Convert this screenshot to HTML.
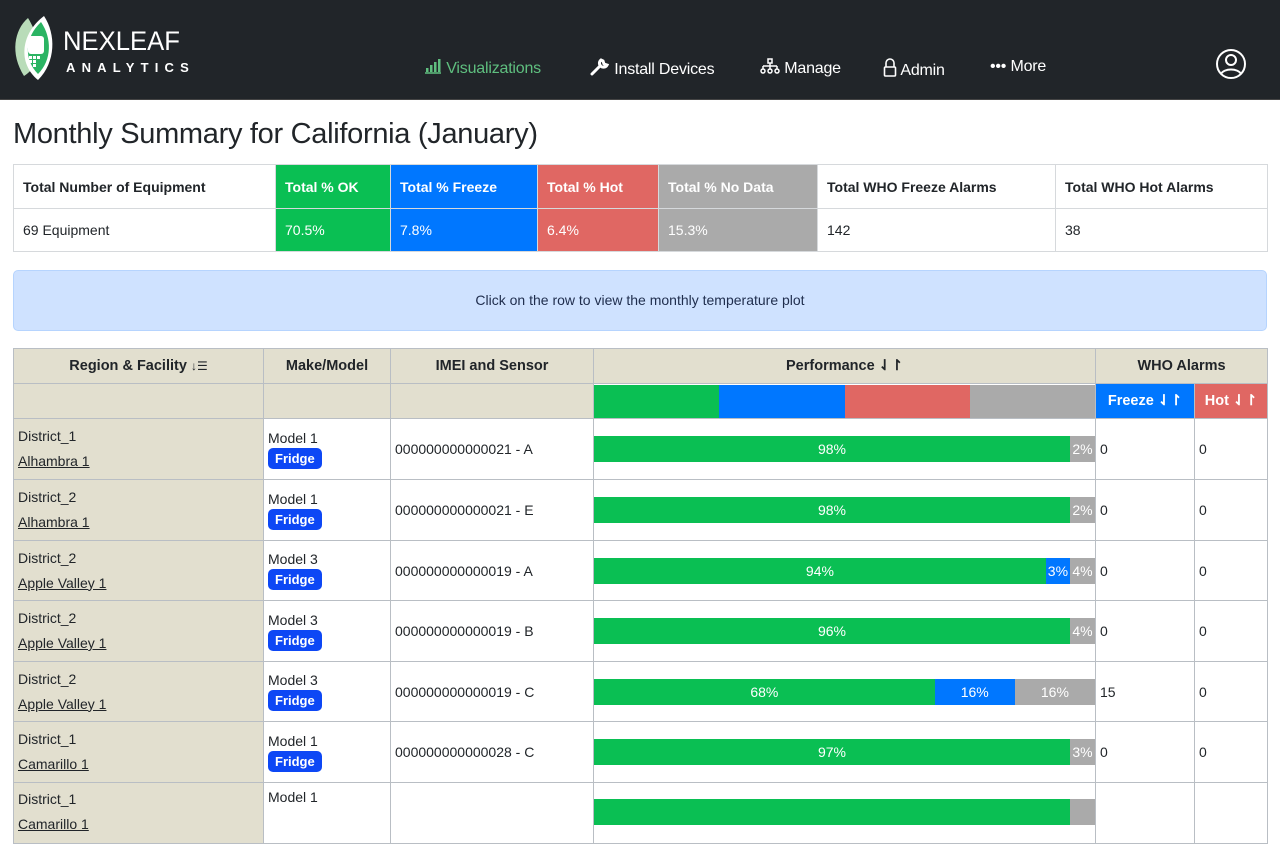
<!DOCTYPE html>
<html><head><meta charset="utf-8"><style>
*{box-sizing:border-box;margin:0;padding:0}
body{width:1280px;height:800px;overflow:hidden;background:#fff;font-family:"Liberation Sans",sans-serif;color:#212529;position:relative}
.nav{position:absolute;left:0;top:0;width:1280px;height:100px;background:#212529;border-bottom:1px solid #444}
.nav .it{position:absolute;top:58px;font-size:16px;color:#fff;letter-spacing:-0.2px;white-space:nowrap}
h1{position:absolute;left:13px;top:118px;font-size:29px;font-weight:normal;letter-spacing:-0.3px}
table{border-collapse:collapse;table-layout:fixed;position:absolute}
td,th{border:1px solid #d6d9dc;font-size:14px}
.sum td{padding:0 9px}
.sum th{padding:0 9px;text-align:left;font-weight:bold}
.w{color:#fff}
.info{position:absolute;left:13px;top:270px;width:1254px;height:61px;background:#cfe2ff;border:1px solid #b6d4fe;border-radius:5px;text-align:center;line-height:58px;font-size:14px;color:#1f2d4d}
.m td,.m th{border:1px solid #b9bec4}
.m th{background:#e2dfcf;font-weight:bold;text-align:center;font-size:14.5px}
.m th.b{background:#0077ff;color:#fff}
.m th.r{background:#e06763;color:#fff}
.m td{font-size:14px;padding:0 4px}
.rf{background:#e2dfcf}
.rf div{line-height:25px}
.rf u{text-decoration:underline}
.badge{display:inline-block;background:#0d47f5;color:#fff;font-weight:bold;font-size:13px;border-radius:5px;padding:3px 7px;margin-top:2px}
.bar{display:flex;height:26px;color:#fff;font-size:14px;line-height:26px;text-align:center}
.g{background:#0abf53}.b{background:#0077ff}.r{background:#e06763}.gr{background:#aaa}
td.p{padding:0!important}
</style></head><body>
<div class="nav">
<svg style="position:absolute;left:10px;top:14px" width="46" height="68" viewBox="0 0 46 68">
<path d="M18 4 C4 16 0 40 14 62 C30 52 34 30 18 4Z" fill="#b9dcb9"/>
<path d="M34 2 C46 20 46 48 28 66 C8 50 10 20 34 2Z" fill="#fff"/>
<path d="M31 8 C42 24 42 46 28 60 C14 46 14 24 31 8Z" fill="#2bb463"/>
<rect x="18" y="22" width="16" height="18" rx="3" fill="#fff"/>
<rect x="19" y="42" width="3" height="3" fill="#fff"/><rect x="23" y="42" width="3" height="3" fill="#fff"/><rect x="27" y="42" width="3" height="3" fill="#fff"/>
<rect x="19" y="46" width="3" height="3" fill="#fff"/><rect x="23" y="46" width="3" height="3" fill="#fff"/><rect x="23" y="50" width="3" height="3" fill="#fff"/>
</svg>
<div style="position:absolute;left:63px;top:26px;color:#fff;font-size:27px;letter-spacing:0;line-height:30px;transform:scaleX(0.95);transform-origin:left">NEXLEAF</div>
<div style="position:absolute;left:66px;top:60px;color:#fff;font-size:13px;font-weight:bold;letter-spacing:6.2px">ANALYTICS</div>
<div class="it" style="left:424px;color:#5fbf7f"><svg width="18" height="16" viewBox="0 0 18 16" style="vertical-align:-1px"><path d="M1 15h16" stroke="#5fbf7f" stroke-width="1.5"/><rect x="2" y="10" width="2.5" height="4" fill="#5fbf7f"/><rect x="6" y="7" width="2.5" height="7" fill="#5fbf7f"/><rect x="10" y="4" width="2.5" height="10" fill="#5fbf7f"/><rect x="14" y="1" width="2.5" height="13" fill="#5fbf7f"/></svg> Visualizations</div>
<div class="it" style="left:590px"><svg width="20" height="18" viewBox="0 0 20 18" style="vertical-align:-2px"><path d="M2 16 L10 8 M11 2 a4 4 0 1 0 6 5 l-3-1 -1-3z" stroke="#fff" stroke-width="3" fill="none" stroke-linecap="round"/></svg> Install Devices</div>
<div class="it" style="left:760px"><svg width="20" height="16" viewBox="0 0 20 16" style="vertical-align:-1px" fill="none" stroke="#fff" stroke-width="1.5"><rect x="8" y="1" width="4" height="4"/><path d="M10 5v3M3 8h14M3 8v3M10 8v3M17 8v3"/><circle cx="3" cy="13" r="2"/><circle cx="10" cy="13" r="2"/><circle cx="17" cy="13" r="2"/></svg> Manage</div>
<div class="it" style="left:883px"><svg width="14" height="20" viewBox="0 0 14 20" style="vertical-align:-3px" fill="none" stroke="#fff" stroke-width="1.6"><path d="M3 9V5a4 4 0 0 1 8 0v4"/><rect x="1.5" y="9" width="11" height="9" rx="1"/></svg> Admin</div>
<div class="it" style="left:990px">••• More</div>
<svg style="position:absolute;left:1215px;top:48px" width="32" height="32" viewBox="0 0 32 32" fill="none" stroke="#fff" stroke-width="2"><circle cx="16" cy="16" r="14"/><circle cx="16" cy="12" r="5"/><path d="M6 26c3-6 17-6 20 0"/></svg>
</div>
<h1>Monthly Summary for California (January)</h1>
<table class="sum" style="left:13px;top:164px;width:1254px">
<colgroup><col style="width:262px"><col style="width:115px"><col style="width:147px"><col style="width:121px"><col style="width:159px"><col style="width:238px"><col style="width:212px"></colgroup>
<tr style="height:44px"><th>Total Number of Equipment</th><th class="w g">Total % OK</th><th class="w b">Total % Freeze</th><th class="w r">Total % Hot</th><th class="w gr">Total % No Data</th><th>Total WHO Freeze Alarms</th><th>Total WHO Hot Alarms</th></tr>
<tr style="height:43px"><td>69 Equipment</td><td class="w g">70.5%</td><td class="w b">7.8%</td><td class="w r">6.4%</td><td class="w gr">15.3%</td><td>142</td><td>38</td></tr>
</table>
<div class="info">Click on the row to view the monthly temperature plot</div>
<table class="m" style="left:13px;top:348px;width:1254px">
<colgroup><col style="width:250px"><col style="width:127px"><col style="width:203px"><col style="width:502px"><col style="width:99px"><col style="width:73px"></colgroup>
<tr style="height:35px"><th>Region &amp; Facility <span style="font-weight:normal;font-size:12px">↓☰</span></th><th>Make/Model</th><th>IMEI and Sensor</th><th>Performance ⇃↾</th><th colspan="2">WHO Alarms</th></tr>
<tr style="height:35px"><th></th><th></th><th></th><td class="p"><div class="bar" style="height:33px"><div class="g" style="flex:1"></div><div class="b" style="flex:1"></div><div class="r" style="flex:1"></div><div class="gr" style="flex:1"></div></div></td><th class="b">Freeze ⇃↾</th><th class="r">Hot ⇃↾</th></tr>
<tr style="height:61px"><td class="rf"><div>District_1</div><div><u>Alhambra 1</u></div></td><td>Model 1<br><span class="badge">Fridge</span></td><td>000000000000021 - A</td><td class="p"><div class="bar"><div class="g" style="width:95%">98%</div><div class="gr" style="width:5%">2%</div></div></td><td>0</td><td>0</td></tr>
<tr style="height:61px"><td class="rf"><div>District_2</div><div><u>Alhambra 1</u></div></td><td>Model 1<br><span class="badge">Fridge</span></td><td>000000000000021 - E</td><td class="p"><div class="bar"><div class="g" style="width:95%">98%</div><div class="gr" style="width:5%">2%</div></div></td><td>0</td><td>0</td></tr>
<tr style="height:60px"><td class="rf"><div>District_2</div><div><u>Apple Valley 1</u></div></td><td>Model 3<br><span class="badge">Fridge</span></td><td>000000000000019 - A</td><td class="p"><div class="bar"><div class="g" style="width:90.2%">94%</div><div class="b" style="width:4.8%">3%</div><div class="gr" style="width:5%">4%</div></div></td><td>0</td><td>0</td></tr>
<tr style="height:61px"><td class="rf"><div>District_2</div><div><u>Apple Valley 1</u></div></td><td>Model 3<br><span class="badge">Fridge</span></td><td>000000000000019 - B</td><td class="p"><div class="bar"><div class="g" style="width:95%">96%</div><div class="gr" style="width:5%">4%</div></div></td><td>0</td><td>0</td></tr>
<tr style="height:60px"><td class="rf"><div>District_2</div><div><u>Apple Valley 1</u></div></td><td>Model 3<br><span class="badge">Fridge</span></td><td>000000000000019 - C</td><td class="p"><div class="bar"><div class="g" style="width:68%">68%</div><div class="b" style="width:16%">16%</div><div class="gr" style="width:16%">16%</div></div></td><td>15</td><td>0</td></tr>
<tr style="height:61px"><td class="rf"><div>District_1</div><div><u>Camarillo 1</u></div></td><td>Model 1<br><span class="badge">Fridge</span></td><td>000000000000028 - C</td><td class="p"><div class="bar"><div class="g" style="width:95%">97%</div><div class="gr" style="width:5%">3%</div></div></td><td>0</td><td>0</td></tr>
<tr style="height:61px"><td class="rf" style="vertical-align:top;padding-top:4px"><div>District_1</div><div><u>Camarillo 1</u></div></td><td style="vertical-align:top;padding-top:6px">Model 1</td><td></td><td class="p" style="vertical-align:top;padding-top:16px!important"><div class="bar"><div class="g" style="width:95%"></div><div class="gr" style="width:5%"></div></div></td><td></td><td></td></tr>
</table>
</body></html>
